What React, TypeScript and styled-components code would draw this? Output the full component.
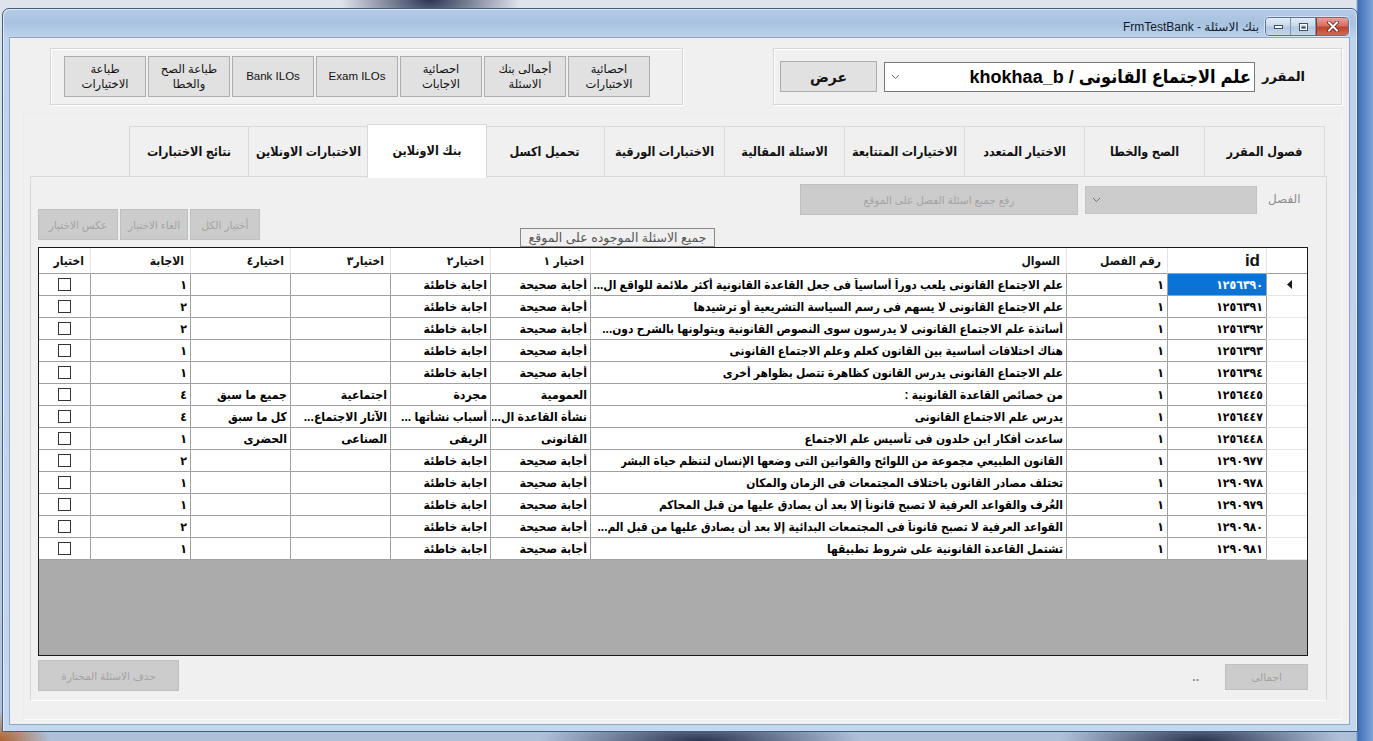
import React from "react";
import styled, { createGlobalStyle } from "styled-components";

const UI = `"Liberation Sans", "DejaVu Sans", sans-serif`;
const UI_NARROW = `"Liberation Sans", "DejaVu Sans Condensed", "DejaVu Sans", sans-serif`;

const GlobalStyle = createGlobalStyle`
  html, body { margin: 0; padding: 0; overflow: hidden; }
  body { width: 1373px; height: 741px; font-family: ${UI}; }
  * { box-sizing: border-box; }
`;

/* ---------- desktop + window chrome ---------- */

const Desktop = styled.div`
  width: 1373px;
  height: 741px;
  padding: 8px 15px 9px 2px;
  display: flex;
  background:
    radial-gradient(ellipse 90px 40px at 430px 0px, #2b3553 0%, rgba(43,53,83,0) 100%),
    radial-gradient(ellipse 160px 30px at 700px 741px, #2a3450 0%, rgba(42,52,80,0) 100%),
    radial-gradient(ellipse 140px 30px at 1200px 741px, #28324d 0%, rgba(40,50,77,0) 100%),
    radial-gradient(ellipse 50px 30px at 0px 741px, #b0622e 0%, rgba(176,98,46,0) 100%),
    linear-gradient(90deg, rgba(0,0,0,0) 1356px, #3e6fb6 1358px, #7ea3d6 1373px),
    linear-gradient(180deg, #dfe4ec 0%, #c9d3e2 50%, #aebfd8 100%);
`;

const Window = styled.div`
  flex: 1;
  display: flex;
  flex-direction: column;
  border: 1px solid #3f5f86;
  border-radius: 7px 7px 0 0;
  background: linear-gradient(180deg, #b3cbe6 0px, #a8c2e0 14px, #bed3ec 29px, #c3d7ee 100%);
  box-shadow: inset 1px 1px 0 rgba(255,255,255,0.6), inset -1px 0 0 rgba(255,255,255,0.5);
`;

const TitleBar = styled.div`
  height: 29px;
  display: flex;
  justify-content: flex-end;
  align-items: flex-start;
  padding: 8px 8px 0 0;
`;

const TitleText = styled.div`
  direction: rtl;
  font: 12px ${UI};
  color: #0f1a2b;
  margin: 3px 6px 0 0;
  white-space: nowrap;
`;

const CaptionGroup = styled.div`
  display: flex;
  border: 1px solid #5a7397;
  border-radius: 4px;
  overflow: hidden;
  height: 19px;
  box-shadow: 0 0 0 1px rgba(255,255,255,0.5);
`;

const CaptionButton = styled.div<{ $close?: boolean }>`
  width: ${(p) => (p.$close ? 32 : 25)}px;
  height: 100%;
  display: flex;
  align-items: center;
  justify-content: center;
  border-left: ${(p) => (p.$close ? "1px solid #7a3b33" : "none")};
  border-right: ${(p) => (p.$close ? "none" : "1px solid #7b93b5")};
  background: ${(p) =>
    p.$close
      ? "linear-gradient(180deg, #e6a398 0%, #d4715f 45%, #c0442e 55%, #cf6a52 100%)"
      : "linear-gradient(180deg, #e4ecf6 0%, #c9d8ea 45%, #b3c7e0 55%, #c6d7ec 100%)"};
`;

/* ---------- client area ---------- */

const Client = styled.div`
  flex: 1;
  margin: 0 8px 7px 7px;
  background: #f0f0f0;
  display: flex;
  flex-direction: column;
  box-shadow: 0 0 0 1px #8ea6c4;
`;

const TopRow = styled.div`
  display: flex;
  justify-content: space-between;
  margin-top: 10px;
  padding: 0 7px 0 40px;
  height: 57px;
`;

const GroupBox = styled.div<{ $w: number }>`
  width: ${(p) => p.$w}px;
  height: 100%;
  border: 1px solid #d6d6d6;
  box-shadow: inset 1px 1px 0 #fff, 1px 1px 0 #fff;
  display: flex;
  align-items: center;
`;

const ToolGroup = styled(GroupBox)`
  padding: 0 0 0 13px;
  gap: 2px;
`;

const ToolButton = styled.div`
  width: 82px;
  height: 41px;
  background: #e1e1e1;
  border: 1px solid #adadad;
  display: flex;
  align-items: center;
  justify-content: center;
  text-align: center;
  direction: rtl;
  font: 11.5px/15px ${UI};
  color: #111;
  white-space: pre-line;
`;

const CourseGroup = styled(GroupBox)`
  padding: 0 0 0 6px;
  gap: 7px;
`;

const ShowButton = styled.div`
  width: 97px;
  height: 31px;
  background: #e1e1e1;
  border: 1px solid #adadad;
  display: flex;
  align-items: center;
  justify-content: center;
  font: bold 14px ${UI};
  color: #111;
`;

const CourseCombo = styled.div`
  width: 371px;
  height: 30px;
  background: #fff;
  border: 1px solid #7a7a7a;
  display: flex;
  align-items: center;
  justify-content: space-between;
  padding: 0 3px 0 6px;
`;

const ComboText = styled.div`
  direction: rtl;
  font: bold 18px ${UI_NARROW};
  color: #000;
  white-space: nowrap;
`;

const FieldLabel = styled.div<{ $muted?: boolean }>`
  direction: rtl;
  font: ${(p) => (p.$muted ? "12px" : "bold 13px")} ${UI};
  color: ${(p) => (p.$muted ? "#8e8e8e" : "#111")};
  white-space: nowrap;
`;

const OuterPanel = styled.div`
  flex: 1;
  margin: 8px 7px 4px 13px;
  border: 1px solid #ececec;
  border-bottom-color: #fbfbfb;
  border-right-color: #f6f6f6;
  padding: 10px 14px 18px 6px;
  display: flex;
  flex-direction: column;
`;

/* ---------- tab control ---------- */

const TabStrip = styled.div`
  direction: rtl;
  display: flex;
  align-items: flex-end;
  height: 53px;
  padding-right: 2px;
`;

const Tab = styled.div<{ $active?: boolean }>`
  width: 120px;
  height: ${(p) => (p.$active ? 54 : 51)}px;
  margin: ${(p) => (p.$active ? "0 -2px -1px -2px" : "0")};
  flex: none;
  position: relative;
  z-index: ${(p) => (p.$active ? 2 : 1)};
  background: ${(p) => (p.$active ? "#ffffff" : "#f0f0f0")};
  border: 1px solid #d9d9d9;
  border-bottom: ${(p) => (p.$active ? "none" : "1px solid #d9d9d9")};
  border-left-width: ${(p) => (p.$active ? 1 : 0)}px;
  display: flex;
  align-items: center;
  justify-content: center;
  padding-bottom: ${(p) => (p.$active ? 3 : 0)}px;
  font: bold 12.5px ${UI_NARROW};
  color: #111;
  white-space: nowrap;
  &:last-child { border-left-width: 1px; }
`;

const TabPage = styled.div`
  flex: 1;
  margin-top: -1px;
  border: 1px solid #d9d9d9;
  border-bottom-color: #ffffff;
  background: #f0f0f0;
  display: flex;
  flex-direction: column;
`;

const ControlsBar = styled.div`
  height: 70px;
  display: flex;
  align-items: flex-start;
  padding-left: 7px;
`;

const Cluster = styled.div<{ $top: number; $left?: number }>`
  display: flex;
  gap: 2px;
  margin-top: ${(p) => p.$top}px;
  margin-left: ${(p) => p.$left ?? 0}px;
  align-items: center;
`;

const DisabledButton = styled.div<{ $w: number; $h?: number }>`
  width: ${(p) => p.$w}px;
  height: ${(p) => p.$h ?? 31}px;
  background: #cccccc;
  border: 1px solid #bfbfbf;
  display: flex;
  align-items: center;
  justify-content: center;
  direction: rtl;
  font: 10.5px ${UI};
  color: #a3a3a3;
  white-space: nowrap;
`;

const DisabledCombo = styled.div`
  width: 172px;
  height: 28px;
  background: #cccccc;
  border: 1px solid #c4c4c4;
  display: flex;
  align-items: center;
  padding-left: 6px;
`;

const CaptionBox = styled.div`
  width: 195px;
  height: 19px;
  border: 1px solid #8a8a8a;
  display: flex;
  align-items: center;
  justify-content: center;
  direction: rtl;
  font: 12.5px ${UI};
  color: #555;
  white-space: nowrap;
`;

/* ---------- data grid ---------- */

const COLS = "41px 99px 101px 476px 100px 100px 100px 100px 100px 51px";

const GridFrame = styled.div`
  width: 1270px;
  height: 409px;
  margin-left: 7px;
  border: 1px solid #1a1a1a;
  background: #ababab;
  direction: rtl;
  overflow: hidden;
  flex: none;
`;

const GridRow = styled.div<{ $header?: boolean }>`
  display: grid;
  grid-template-columns: ${COLS};
  height: ${(p) => (p.$header ? 26 : 22)}px;
  background: #fff;
`;

const HeadCell = styled.div<{ $big?: boolean }>`
  border-left: 1px solid #e3e3e3;
  border-bottom: 1px solid #a0a0a0;
  display: flex;
  align-items: center;
  padding-right: 6px;
  font: bold ${(p) => (p.$big ? "17px" : "12px")} ${UI_NARROW};
  color: #111;
  white-space: nowrap;
  overflow: hidden;
  &:last-child { border-left: none; }
`;

const RowHead = styled.div`
  border-left: 1px solid #a0a0a0;
  border-bottom: 1px solid #e6e6e6;
  display: flex;
  align-items: center;
  justify-content: flex-end;
  padding-left: 20px;
`;

type CellKind = "text" | "long" | "id" | "check";

const Cell = styled.div<{ $selected?: boolean; $kind?: CellKind }>`
  min-width: 0;
  border-left: 1px solid #a0a0a0;
  border-bottom: 1px solid #a0a0a0;
  display: flex;
  align-items: center;
  justify-content: ${(p) => (p.$kind === "check" ? "center" : "flex-start")};
  padding-right: ${(p) => (p.$kind === "check" ? 0 : 3)}px;
  padding-left: ${(p) => (p.$kind === "check" ? 0 : 1)}px;
  background: ${(p) => (p.$selected ? "#0a74d6" : "#fff")};
  color: ${(p) => (p.$selected ? "#fff" : "#000")};
  font: bold ${(p) => (p.$kind === "long" ? "11.9px" : "12.2px")} ${UI_NARROW};
  letter-spacing: ${(p) => (p.$kind === "id" ? "1.6px" : "0")};
  white-space: nowrap;
  overflow: hidden;
  &:last-child { border-left: none; }
`;

const CellText = styled.span`
  display: block;
  min-width: 0;
  overflow: hidden;
  white-space: nowrap;
`;

const CheckBox = styled.div`
  width: 13px;
  height: 13px;
  border: 1px solid #333;
  background: #fff;
`;

const FooterBar = styled.div`
  display: flex;
  align-items: flex-start;
  padding: 4px 18px 0 7px;
  height: 43px;
`;

const Dots = styled.div`
  margin: 10px 26px 0 auto;
  font: bold 12px ${UI};
  color: #888;
`;

/* ---------- icons ---------- */

const Chevron = () => (
  <svg width="9" height="6" viewBox="0 0 9 6">
    <path d="M1 1 L4.5 4.5 L8 1" fill="none" stroke="#707070" strokeWidth="1" />
  </svg>
);

const RowPointer = () => (
  <svg width="5" height="9" viewBox="0 0 5 9">
    <path d="M5 0 L0 4.5 L5 9 Z" fill="#1a1a1a" />
  </svg>
);

const MinGlyph = () => (
  <svg width="11" height="6" viewBox="0 0 11 6">
    <rect x="1.5" y="1.5" width="8" height="3" fill="#fff" stroke="#3a4f6b" strokeWidth="1" />
  </svg>
);

const MaxGlyph = () => (
  <svg width="11" height="10" viewBox="0 0 11 10">
    <rect x="1.5" y="1.5" width="8" height="7" fill="none" stroke="#3a4f6b" strokeWidth="1" />
    <rect x="2.5" y="2.5" width="6" height="5" fill="none" stroke="#fff" strokeWidth="1" />
    <rect x="3.5" y="4.5" width="4" height="2" fill="#3a4f6b" />
  </svg>
);

const CloseGlyph = () => (
  <svg width="12" height="11" viewBox="0 0 12 11">
    <path d="M2 1.5 L10 9.5 M10 1.5 L2 9.5" stroke="#5a1a12" strokeWidth="3.6" strokeLinecap="square" />
    <path d="M2 1.5 L10 9.5 M10 1.5 L2 9.5" stroke="#fff" strokeWidth="2" strokeLinecap="square" />
  </svg>
);

/* ---------- data ---------- */

const toolButtons = [
  "طباعة\nالاختيارات",
  "طباعة الصح\nوالخطا",
  "Bank ILOs",
  "Exam ILOs",
  "احصائية\nالاجابات",
  "أجمالى بنك\nالاسئلة",
  "احصائية\nالاختبارات",
];

const tabs = [
  "فصول المقرر",
  "الصح والخطا",
  "الاختيار المتعدد",
  "الاختيارات المتتابعة",
  "الاسئلة المقالية",
  "الاختبارات الورقية",
  "تحميل اكسل",
  "بنك الاونلاين",
  "الاختبارات الاونلاين",
  "نتائج الاختبارات",
];
const ACTIVE_TAB = 7;

const headers = ["رقم الفصل", "السوال", "اختيار ١", "اختيار٢", "اختيار٣", "اختيار٤", "الاجابة", "اختيار"];

type Question = { id: string; q: string; o1: string; o2: string; o3: string; o4: string; a: string };

const TF = ["أجابة صحيحة", "اجابة خاطئة"];

const questions: Question[] = [
  { id: "١٢٥٦٣٩٠", q: "علم الاجتماع القانونى  يلعب دوراً أساسياً فى جعل القاعدة القانونية أكثر ملائمة للواقع ال...", o1: TF[0], o2: TF[1], o3: "", o4: "", a: "١" },
  { id: "١٢٥٦٣٩١", q: "علم الاجتماع القانونى لا يسهم فى رسم السياسة التشريعية أو ترشيدها", o1: TF[0], o2: TF[1], o3: "", o4: "", a: "٢" },
  { id: "١٢٥٦٣٩٢", q: "أساتذة علم الاجتماع القانونى لا يدرسون سوى النصوص القانونية ويتولونها بالشرح دون...", o1: TF[0], o2: TF[1], o3: "", o4: "", a: "٢" },
  { id: "١٢٥٦٣٩٣", q: "هناك اختلافات أساسية بين القانون كعلم وعلم الاجتماع القانونى", o1: TF[0], o2: TF[1], o3: "", o4: "", a: "١" },
  { id: "١٢٥٦٣٩٤", q: "علم الاجتماع القانونى يدرس القانون كظاهرة تتصل بظواهر أخرى", o1: TF[0], o2: TF[1], o3: "", o4: "", a: "١" },
  { id: "١٢٥٦٤٤٥", q: "من خصائص القاعدة القانونية :", o1: "العمومية", o2: "مجردة", o3: "اجتماعية", o4: "جميع ما سبق", a: "٤" },
  { id: "١٢٥٦٤٤٧", q: "يدرس علم الاجتماع القانونى", o1: "نشأة القاعدة ال...", o2: "أسباب نشأتها ...", o3: "الآثار الاجتماع...", o4: "كل ما سبق", a: "٤" },
  { id: "١٢٥٦٤٤٨", q: "ساعدت أفكار ابن خلدون فى تأسيس علم الاجتماع", o1: "القانونى", o2: "الريفى", o3: "الصناعى", o4: "الحضرى", a: "١" },
  { id: "١٢٩٠٩٧٧", q: "القانون الطبيعي مجموعة من اللوائح والقوانين التى وضعها الإنسان لتنظم حياة البشر", o1: TF[0], o2: TF[1], o3: "", o4: "", a: "٢" },
  { id: "١٢٩٠٩٧٨", q: "تختلف مصادر القانون باختلاف المجتمعات فى الزمان والمكان", o1: TF[0], o2: TF[1], o3: "", o4: "", a: "١" },
  { id: "١٢٩٠٩٧٩", q: "العُرف والقواعد العرفية لا تصبح قانوناً إلا بعد أن يصادق عليها من قبل المحاكم", o1: TF[0], o2: TF[1], o3: "", o4: "", a: "١" },
  { id: "١٢٩٠٩٨٠", q: "القواعد العرفية لا تصبح قانوناً فى المجتمعات البدائية إلا بعد أن يصادق عليها من قبل الم...", o1: TF[0], o2: TF[1], o3: "", o4: "", a: "٢" },
  { id: "١٢٩٠٩٨١", q: "تشتمل القاعدة القانونية على شروط تطبيقها", o1: TF[0], o2: TF[1], o3: "", o4: "", a: "١" },
];

/* ---------- page ---------- */

export default function App() {
  return (
    <>
      <GlobalStyle />
      <Desktop>
        <Window>
          <TitleBar>
            <TitleText>بنك الاسئلة - FrmTestBank</TitleText>
            <CaptionGroup>
              <CaptionButton><MinGlyph /></CaptionButton>
              <CaptionButton><MaxGlyph /></CaptionButton>
              <CaptionButton $close><CloseGlyph /></CaptionButton>
            </CaptionGroup>
          </TitleBar>

          <Client>
            <TopRow>
              <ToolGroup $w={633}>
                {toolButtons.map((t) => (
                  <ToolButton key={t}>{t}</ToolButton>
                ))}
              </ToolGroup>
              <CourseGroup $w={569}>
                <ShowButton>عرض</ShowButton>
                <CourseCombo>
                  <Chevron />
                  <ComboText>علم الاجتماع القانونى / khokhaa_b</ComboText>
                </CourseCombo>
                <FieldLabel>المقرر</FieldLabel>
              </CourseGroup>
            </TopRow>

            <OuterPanel>
              <TabStrip>
                {tabs.map((t, i) => (
                  <Tab key={t} $active={i === ACTIVE_TAB}>{t}</Tab>
                ))}
              </TabStrip>

              <TabPage>
                <ControlsBar>
                  <Cluster $top={32}>
                    <DisabledButton $w={80}>عكس الاختيار</DisabledButton>
                    <DisabledButton $w={68}>الغاء الاختيار</DisabledButton>
                    <DisabledButton $w={70}>أختيار الكل</DisabledButton>
                  </Cluster>
                  <Cluster $top={51} $left={260}>
                    <CaptionBox>جميع الاسئلة الموجوده على الموقع</CaptionBox>
                  </Cluster>
                  <Cluster $top={7} $left={85}>
                    <DisabledButton $w={278}>رفع جميع اسئلة الفصل على الموقع</DisabledButton>
                  </Cluster>
                  <Cluster $top={9} $left={7}>
                    <DisabledCombo><Chevron /></DisabledCombo>
                  </Cluster>
                  <Cluster $top={15} $left={11}>
                    <FieldLabel $muted>الفصل</FieldLabel>
                  </Cluster>
                </ControlsBar>

                <GridFrame>
                  <GridRow $header>
                    <HeadCell />
                    <HeadCell $big>id</HeadCell>
                    {headers.map((h) => (
                      <HeadCell key={h}>{h}</HeadCell>
                    ))}
                  </GridRow>
                  {questions.map((r, i) => (
                    <GridRow key={r.id}>
                      <RowHead>{i === 0 ? <RowPointer /> : null}</RowHead>
                      <Cell $kind="id" $selected={i === 0}>{r.id}</Cell>
                      <Cell>١</Cell>
                      <Cell $kind="long"><CellText>{r.q}</CellText></Cell>
                      <Cell><CellText>{r.o1}</CellText></Cell>
                      <Cell><CellText>{r.o2}</CellText></Cell>
                      <Cell><CellText>{r.o3}</CellText></Cell>
                      <Cell><CellText>{r.o4}</CellText></Cell>
                      <Cell>{r.a}</Cell>
                      <Cell $kind="check"><CheckBox /></Cell>
                    </GridRow>
                  ))}
                </GridFrame>

                <FooterBar>
                  <DisabledButton $w={141}>حذف الاسئلة المختارة</DisabledButton>
                  <Dots>..</Dots>
                  <Cluster $top={4}>
                    <DisabledButton $w={83} $h={26}>اجمالى</DisabledButton>
                  </Cluster>
                </FooterBar>
              </TabPage>
            </OuterPanel>
          </Client>
        </Window>
      </Desktop>
    </>
  );
}
